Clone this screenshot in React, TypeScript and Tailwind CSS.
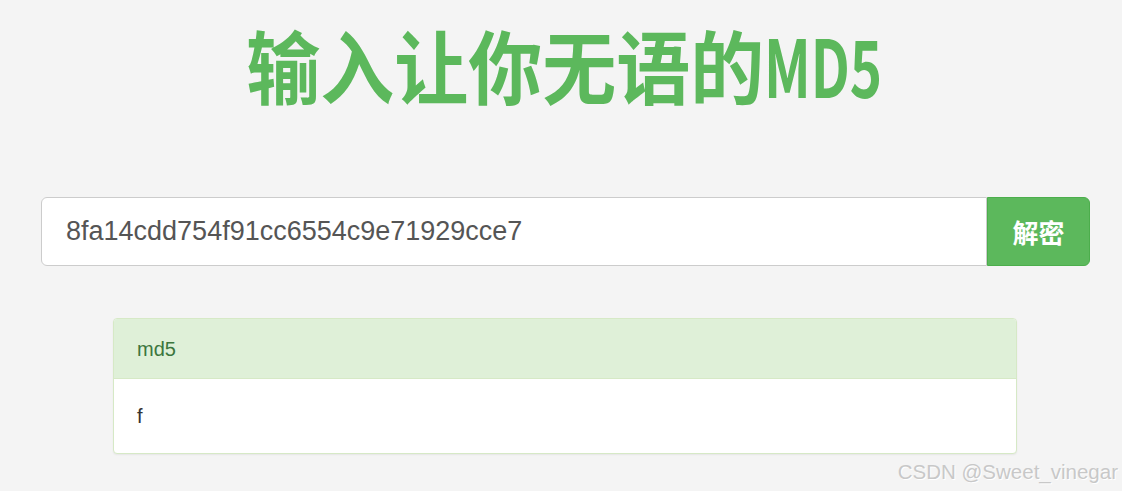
import React from 'react';

export default function App() {
  const hash = '8fa14cdd754f91cc6554c9e71929cce7';
  return (
    <div className="relative w-[1122px] h-[491px] overflow-hidden bg-[#f4f4f4] font-['Liberation_Sans','Noto_Sans_CJK_SC',sans-serif]">
      <h1 className="pt-[22px] pl-[10px] text-center text-[74px] leading-[84px] font-bold text-[#5cb85c] font-['Noto_Sans_CJK_SC',sans-serif]">
        <span className="inline-block scale-y-[1.07]">输入让你无语的</span>
        <span className="inline-block scale-x-[0.74] scale-y-[1.07] origin-left -mr-[38px]">MD5</span>
      </h1>

      <div className="mt-[91px] ml-[41px] flex w-[1049px] h-[69px]">
        <div className="flex-1 flex items-center px-[24px] bg-white border border-[#ccc] rounded-l-[6px] text-[27px] text-[#555]">
          {hash}
        </div>
        <button className="w-[103px] bg-[#5cb85c] border border-[#4cae4c] rounded-r-[6px] text-white text-[26px] font-bold font-['Noto_Sans_CJK_SC',sans-serif]">
          解密
        </button>
      </div>

      <div className="mt-[52px] w-[904px] ml-[113px] rounded-[4px] border border-[#d6e9c6] bg-white shadow-[0_1px_2px_rgba(0,0,0,0.06)] overflow-hidden">
        <div className="h-[60px] flex items-center px-[23px] bg-[#dff0d8] border-b border-[#d6e9c6] text-[20px] text-[#3c763d]">
          md5
        </div>
        <div className="h-[74px] flex items-center px-[23px] text-[20px] text-[#333]">
          f
        </div>
      </div>

      <div className="absolute right-[4px] bottom-[9px] text-[20.5px] leading-none text-[#c8c8c8] [text-shadow:1px_1px_0_#fff] font-['Liberation_Sans',sans-serif]">
        CSDN @Sweet_vinegar
      </div>
    </div>
  );
}
